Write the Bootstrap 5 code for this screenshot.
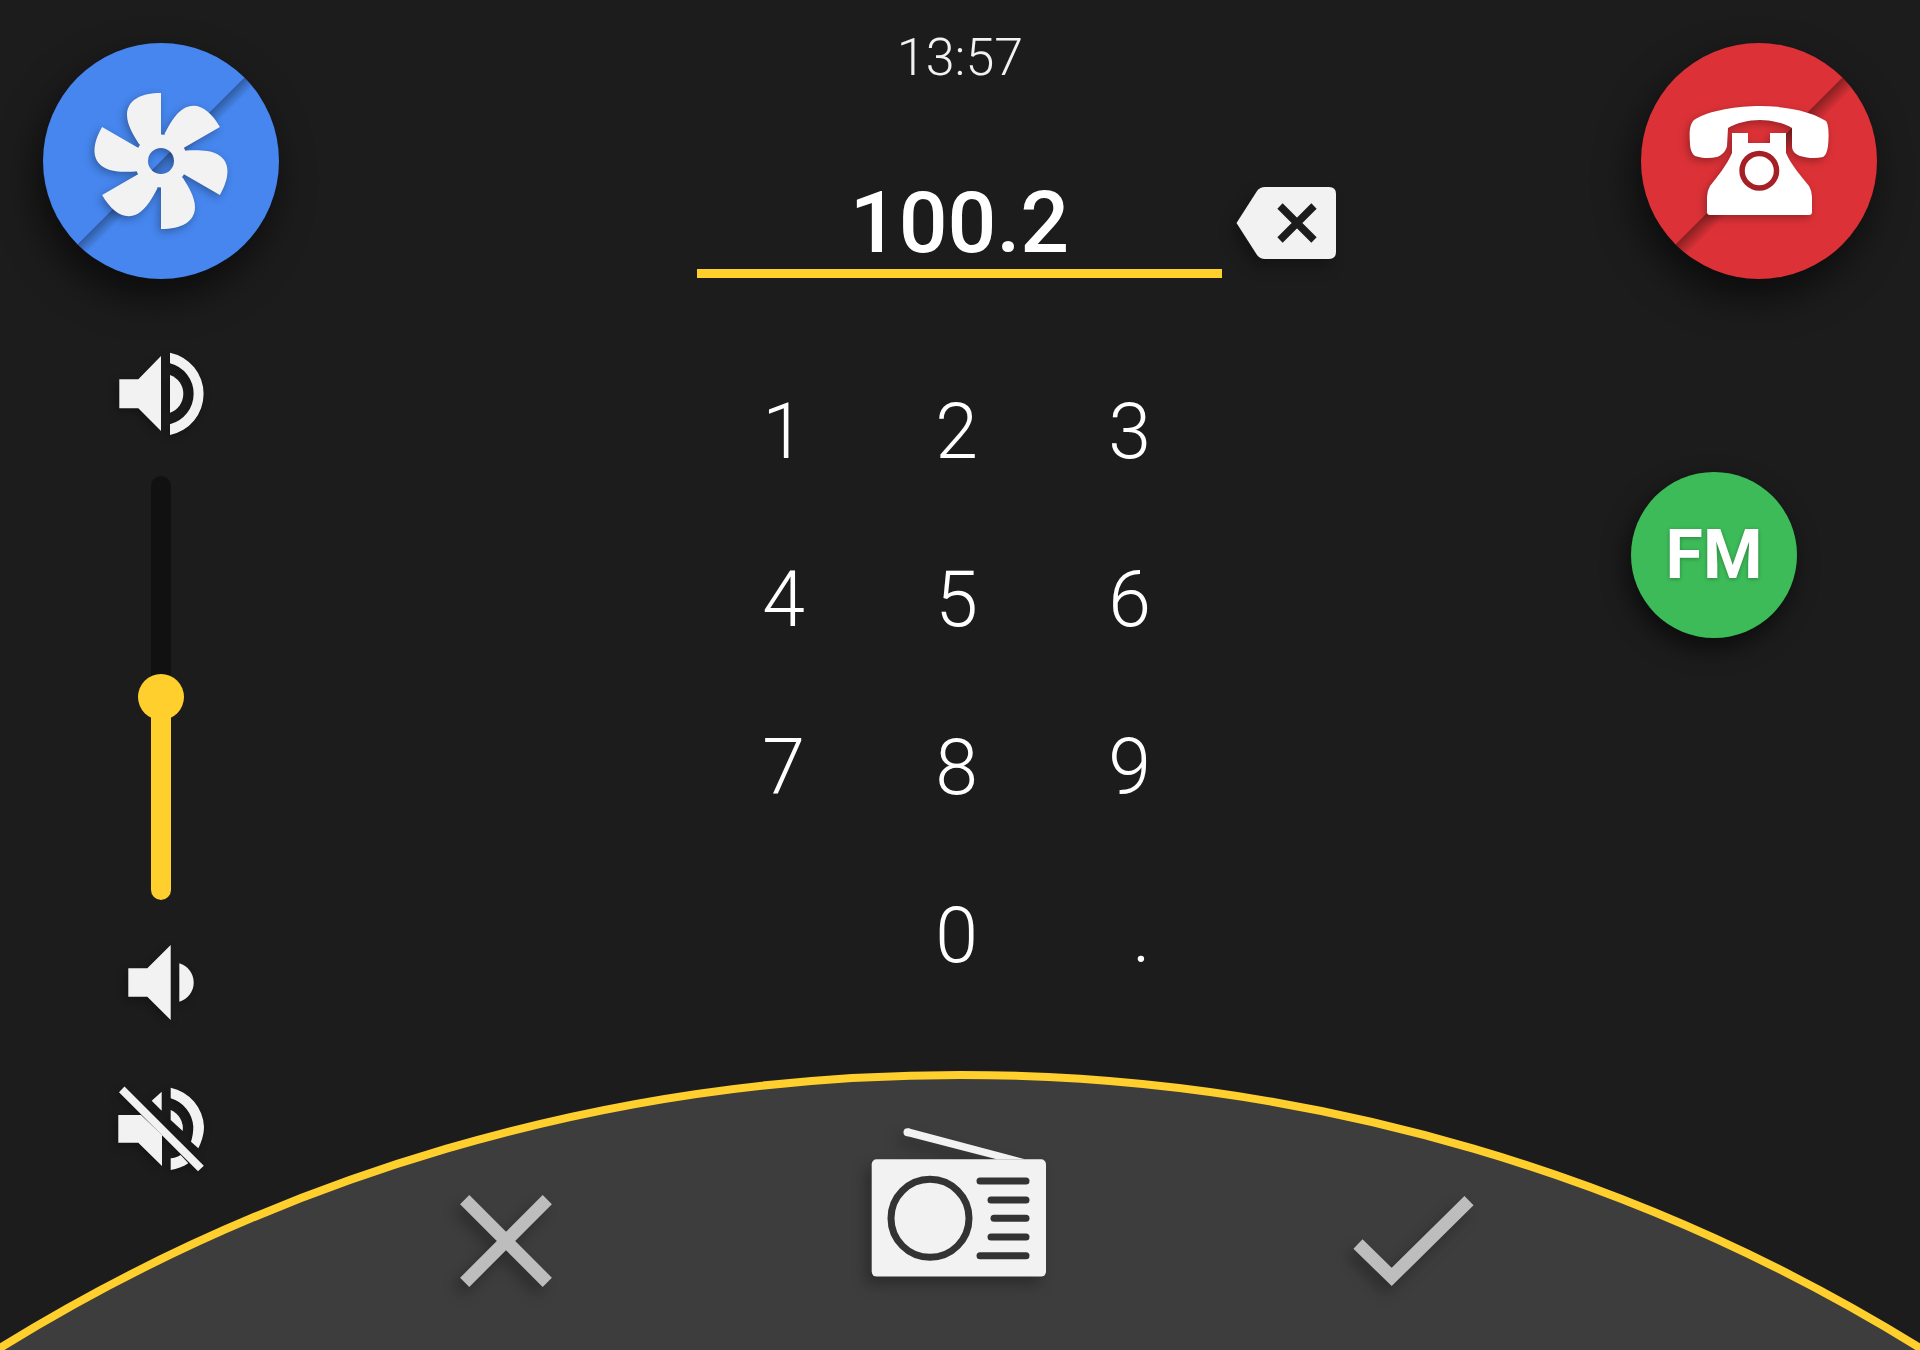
<!DOCTYPE html>
<html lang="en">
<head>
    <meta charset="UTF-8">
    <meta name="viewport" content="width=device-width, initial-scale=1.0">
    <title>Car radio tuner</title>
    <link rel="stylesheet" href="https://cdn.jsdelivr.net/npm/bootstrap@5.3.3/dist/css/bootstrap.min.css">
    <script src="https://cdn.jsdelivr.net/npm/bootstrap@5.3.3/dist/js/bootstrap.bundle.min.js"></script>
    <style>
        body {
            background: #1c1c1c;
            font-family: Roboto, "Liberation Sans", sans-serif;
        }
        svg { display: block; }
        .screen {
            width: 1920px;
            height: 1350px;
            overflow: hidden;
            color: #fff;
        }
        .rail { width: 322px; flex: none; }
        .center-col { flex: 1 1 auto; }

        .round-btn {
            width: 236px;
            height: 236px;
            margin-top: 43px;
            box-shadow: -6px 18px 38px rgba(0, 0, 0, .6);
        }
        .round-blue { background: #4686ee; }
        .round-red { background: #dc3237; }
        .round-green {
            width: 166px;
            height: 166px;
            margin: 193px 90px 0 0;
            background: #3dbb59;
            box-shadow: -4px 10px 24px rgba(0, 0, 0, .6);
            font-size: 68px;
            font-weight: 700;
            line-height: 1;
            text-shadow: 0 1px 4px rgba(0, 0, 0, .3);
        }
        .flat-shadow { filter: drop-shadow(-2px 3px 4px rgba(0, 0, 0, .3)); }
        .long-shadow { filter: drop-shadow(-6px 8px 7px rgba(0, 0, 0, .28)); }

        .vol-high { margin-top: 70px; }
        .vol-low { margin-top: 42px; }
        .vol-mute { margin-top: 61px; }
        .vol-track {
            width: 20px;
            height: 424px;
            margin-top: 37px;
            background: #111;
            border-radius: 10px;
        }
        .vol-fill { background: #ffcf2e; border-radius: 0 0 10px 10px; }
        .vol-knob {
            width: 46px;
            height: 46px;
            left: -13px;
            top: -23px;
            background: #ffcf2e;
        }

        .clock-text {
            margin-top: 25px;
            height: 63px;
            font-size: 52px;
            font-weight: 300;
            line-height: 66px;
            color: #f2f2f2;
        }
        .freq-box { margin-left: 375px; width: 525px; }
        .freq-value {
            margin-top: 80px;
            height: 110px;
            border-bottom: 9px solid #ffcf2e;
            font-size: 86px;
            font-weight: 500;
            line-height: 110px;
        }
        .freq-del { margin: 99px 0 0 14px; }

        .keypad { margin: 70px 0 0 375px; width: 519px; }
        .key-cell {
            height: 168px;
            font-size: 77px;
            font-weight: 300;
            line-height: 168px;
            color: #fff;
        }
        .key-dot { padding-left: 24px; }

        .dome { left: 0; right: 0; bottom: 0; height: 290px; }
        .dome-art { left: 0; top: 0; }
        .dome-row { padding: 0 0 59px 456px; height: 290px; }
        .dome-radio { margin: 0 301px 11px 313px; }
    </style>
</head>
<body>
    <div class="screen position-relative d-flex">

        <!-- left rail -->
        <div class="rail d-flex flex-column align-items-center">
            <div class="round-btn round-blue rounded-circle">
                <svg width="236" height="236" viewBox="-118 -118 236 236">
                    <defs>
                        <linearGradient id="fadeDiag" gradientUnits="userSpaceOnUse" x1="0" y1="0" x2="9" y2="9">
                            <stop offset="0" stop-color="#000" stop-opacity=".32"/>
                            <stop offset="1" stop-color="#000" stop-opacity="0"/>
                        </linearGradient>
                        <clipPath id="discClip"><circle r="118"/></clipPath>
                        <mask id="fanHole">
                            <rect x="-118" y="-118" width="236" height="236" fill="#fff"/>
                            <circle r="13" fill="#000"/>
                        </mask>
                        <path id="fanBlade" d="M0 -68C-20 -68 -34 -61 -34 -46C-34 -36 -27 -25 -22 -17L0 0Z"/>
                    </defs>
                    <g clip-path="url(#discClip)">
                        <polygon points="-120,120 120,-120 140,-100 -100,140" fill="url(#fadeDiag)"/>
                    </g>
                    <g class="flat-shadow">
                        <g fill="#f2f2f2" mask="url(#fanHole)">
                            <circle r="26.5"/>
                            <use href="#fanBlade"/>
                            <use href="#fanBlade" transform="rotate(60)"/>
                            <use href="#fanBlade" transform="rotate(120)"/>
                            <use href="#fanBlade" transform="rotate(180)"/>
                            <use href="#fanBlade" transform="rotate(240)"/>
                            <use href="#fanBlade" transform="rotate(300)"/>
                        </g>
                    </g>
                </svg>
            </div>

            <svg class="vol-high flat-shadow" width="90" height="90" viewBox="0 0 90 90" fill="#f2f2f2">
                <polygon points="3.3,30.3 22.3,30.3 45,7 45,82 22.3,59.3 3.3,59.3"/>
                <path d="M54 26A20 20 0 0 1 54 63.7Z"/>
                <path d="M54 3.7A42 42 0 0 1 54 86V75.3A31.5 31.5 0 0 0 54 14.3Z"/>
            </svg>

            <div class="vol-track position-relative d-flex flex-column justify-content-end">
                <div class="vol-fill" style="height: 47.9%">
                    <div class="vol-knob position-relative rounded-circle"></div>
                </div>
            </div>

            <svg class="vol-low flat-shadow" width="70" height="80" viewBox="0 0 70 80" fill="#f2f2f2">
                <polygon points="2.3,26.3 21.3,26.3 44.7,3 44.7,78 21.3,54.7 2.3,54.7"/>
                <path d="M53.3 21.3A20 20 0 0 1 53.3 59.7Z"/>
            </svg>

            <svg class="vol-mute flat-shadow" width="90" height="90" viewBox="0 0 90 90" fill="#f2f2f2">
                <polygon points="3,9.2 8.5,3.5 87.8,82.8 82,88.2"/>
                <polygon points="45.7,8.7 45.7,27.7 35.7,17.7"/>
                <polygon points="2.3,32 25,32 46,52 46,83 22.3,59.7 2.3,59.7"/>
                <path d="M54.7 27A20 20 0 0 1 66.7 48L54.7 37Z"/>
                <path d="M54.7 4.7A42 42 0 0 1 88 43.7C88 52 85 60 82.3 65.3L75 58.7C76.5 54 77.3 49 77.3 43.7A31.5 31.5 0 0 0 54.7 15.3Z"/>
                <path d="M54.7 75.3C58 75 62 74 64.7 72L72.3 80.3C67 84 61 86 54.7 87Z"/>
            </svg>
        </div>

        <!-- tuner -->
        <div class="center-col">
            <div class="clock-text text-center">13:57</div>
            <div class="d-flex">
                <div class="freq-box">
                    <div class="freq-value text-center">100.2</div>
                </div>
                <svg class="freq-del long-shadow" width="100" height="72" viewBox="0 0 100 72">
                    <path d="M0.5 36L21 4Q24 0 29 0H93Q100 0 100 7V65Q100 72 93 72H29Q24 72 21 68Z" fill="#f2f2f2"/>
                    <path d="M44 19L78 53M78 19L44 53" stroke="#1c1c1c" stroke-width="7.5" fill="none"/>
                </svg>
            </div>
            <div class="keypad row row-cols-3 g-0 text-center">
                <div class="col key-cell">1</div>
                <div class="col key-cell">2</div>
                <div class="col key-cell">3</div>
                <div class="col key-cell">4</div>
                <div class="col key-cell">5</div>
                <div class="col key-cell">6</div>
                <div class="col key-cell">7</div>
                <div class="col key-cell">8</div>
                <div class="col key-cell">9</div>
                <div class="col key-cell"></div>
                <div class="col key-cell">0</div>
                <div class="col key-cell key-dot">.</div>
            </div>
        </div>

        <!-- right rail -->
        <div class="rail d-flex flex-column align-items-center">
            <div class="round-btn round-red rounded-circle">
                <svg width="236" height="236" viewBox="-118 -118 236 236">
                    <defs>
                        <linearGradient id="fadeDiagRed" gradientUnits="userSpaceOnUse" x1="0" y1="0" x2="11" y2="11">
                            <stop offset="0" stop-color="#000" stop-opacity=".38"/>
                            <stop offset="1" stop-color="#000" stop-opacity="0"/>
                        </linearGradient>
                        <clipPath id="discClipRed"><circle r="118"/></clipPath>
                    </defs>
                    <g clip-path="url(#discClipRed)">
                        <polygon points="-120,120 120,-120 140,-100 -100,140" fill="url(#fadeDiagRed)"/>
                    </g>
                    <g class="flat-shadow" fill="#fff">
                        <path d="M-69 -18C-70 -30 -69 -37 -65 -41C-50 -51 -20 -55 1 -55C25 -55 52 -50 67 -40C70 -36 70 -25 69 -15C68 -9 67 -6 64 -4C56 -2 48 -3 41 -5C36 -7 33 -10 33 -15V-33C25 -38 12 -41 1 -41C-11 -41 -23 -38 -31 -33L-32 -15C-33 -10 -37 -6 -42 -4C-50 -2 -58 -3 -64 -5C-67 -7 -69 -12 -69 -18Z"/>
                        <path d="M-27 -28H-11V-18H11V-28H27V-8C32 4 43 16 50 25Q53 30 53 36V51Q53 54 50 54H-49Q-52 54 -52 51V36Q-52 30 -49 25C-42 16 -32 4 -27 -8Z"/>
                    </g>
                    <circle cx="0.3" cy="9.7" r="20" fill="#a51f24"/>
                    <circle cx="0.3" cy="9.7" r="14.5" fill="#fff"/>
                </svg>
            </div>
            <div class="round-green rounded-circle d-flex align-items-center justify-content-center">FM</div>
        </div>

        <!-- curved bottom bar, lies over the page -->
        <div class="dome position-absolute">
            <svg class="dome-art position-absolute" width="1920" height="290" viewBox="0 0 1920 290">
                <path d="M-8 293A1824 1824 0 0 1 1928 293V300H-8Z" fill="#3d3d3d" stroke="#ffcf2e" stroke-width="8"/>
            </svg>
            <div class="dome-row position-relative d-flex align-items-end">
                <svg class="long-shadow" width="100" height="100" viewBox="0 0 100 100">
                    <path d="M8.7 8.7L91.3 91.3M91.3 8.7L8.7 91.3" stroke="#bdbdbd" stroke-width="13" fill="none"/>
                </svg>
                <svg class="dome-radio long-shadow" width="180" height="155" viewBox="0 0 180 155">
                    <circle cx="38.5" cy="7.2" r="4" fill="#f2f2f2"/>
                    <polygon points="39.3,3.3 156,34.3 127.7,34.3 37.7,11" fill="#f2f2f2"/>
                    <rect x="2.7" y="34.3" width="174.3" height="117.3" rx="5" fill="#f2f2f2"/>
                    <circle cx="61" cy="93.3" r="39" fill="none" stroke="#333" stroke-width="7"/>
                    <g stroke="#333" stroke-width="7" stroke-linecap="round">
                        <path d="M111 56H157"/>
                        <path d="M122 75H157"/>
                        <path d="M125 93.3H157"/>
                        <path d="M122 112H157"/>
                        <path d="M111 130.7H157"/>
                    </g>
                </svg>
                <svg class="long-shadow" width="128" height="100" viewBox="0 0 128 100">
                    <polyline points="8,53 41.7,86 119,9.7" stroke="#bdbdbd" stroke-width="13" fill="none"/>
                </svg>
            </div>
        </div>
    </div>
</body>
</html>
